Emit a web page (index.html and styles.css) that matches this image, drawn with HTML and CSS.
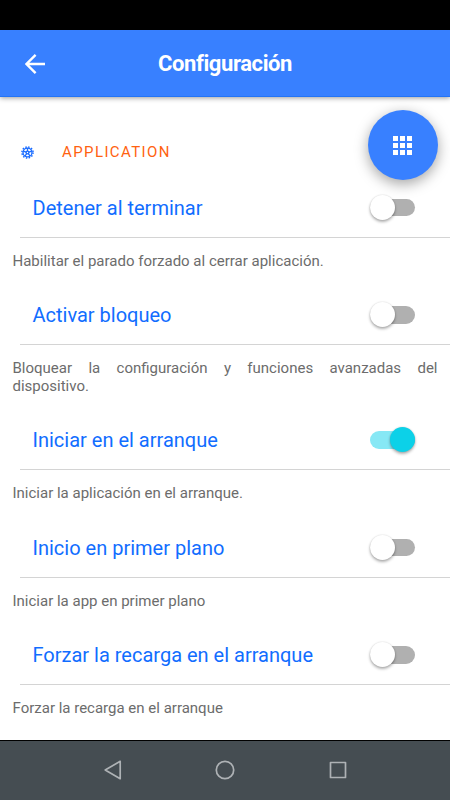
FILE: index.html
```html
<!DOCTYPE html>
<html lang="es">
<head>
	<meta charset="utf-8">
	<title>Configuración</title>
	<link rel="stylesheet" href="styles.css">
</head>
<body>
	<div class="statusbar"></div>
	<header class="toolbar">
		<svg class="back" viewBox="0 0 20 20"><path d="M20 10H1.5M10.6 .9L1.5 10l9.1 9.1"/></svg>
		<h1 class="title">Configuración</h1>
	</header>
	<main class="content">
		<div class="fab">
			<svg viewBox="0 0 19 19"><path d="M0 0h5v5H0zM7 0h5v5H7zM14 0h5v5h-5zM0 7h5v5H0zM7 7h5v5H7zM14 7h5v5h-5zM0 14h5v5H0zM7 14h5v5H7zM14 14h5v5h-5z"/></svg>
		</div>
		<div class="section">
			<svg class="gear" viewBox="0 0 14 14">
				<circle class="teeth" cx="7" cy="7" r="6"/>
				<circle cx="7" cy="7" r="4.8"/>
				<circle cx="7" cy="7" r="1.5"/>
				<path d="M7 5.5V2.2M8.4 6.5l3.2-1M7.9 8.2l1.9 2.7M6.1 8.2l-1.9 2.7M5.6 6.5l-3.2-1"/>
			</svg>
			<h2 class="section-title">APPLICATION</h2>
		</div>

		<div class="item">
			<span class="label">Detener al terminar</span>
			<span class="toggle"></span>
		</div>
		<p class="note">Habilitar el parado forzado al cerrar aplicación.</p>

		<div class="item">
			<span class="label">Activar bloqueo</span>
			<span class="toggle"></span>
		</div>
		<p class="note">Bloquear la configuración y funciones avanzadas del dispositivo.</p>

		<div class="item">
			<span class="label">Iniciar en el arranque</span>
			<span class="toggle on"></span>
		</div>
		<p class="note">Iniciar la aplicación en el arranque.</p>

		<div class="item">
			<span class="label">Inicio en primer plano</span>
			<span class="toggle"></span>
		</div>
		<p class="note">Iniciar la app en primer plano</p>

		<div class="item">
			<span class="label">Forzar la recarga en el arranque</span>
			<span class="toggle"></span>
		</div>
		<p class="note">Forzar la recarga en el arranque</p>
	</main>
	<nav class="navbar">
		<svg viewBox="0 0 20 20"><path d="M17.2 1.3v17.4L2.2 10z"/></svg>
		<svg viewBox="0 0 20 20"><circle cx="10" cy="10" r="8.7"/></svg>
		<svg viewBox="0 0 20 20"><path d="M2.5 2.5h15v15h-15z"/></svg>
	</nav>
</body>
</html>
```
FILE: styles.css
```css
* {
	box-sizing: border-box;
}
body {
	display: flex;
	flex-direction: column;
	height: 800px;
	margin: 0;
	overflow: hidden;
	background: #fff;
	font-family: Roboto, sans-serif;
}

.statusbar {
	flex: none;
	height: 30px;
	background: #000;
}
.toolbar {
	flex: none;
	display: grid;
	grid-template-columns: 70px 1fr 70px;
	align-items: center;
	height: 67px;
	padding-top: 1px;
	background: #3880ff;
	border-bottom: 1px solid #2474f5;
	box-shadow: 0 1px 5px rgba(0, 0, 0, .4);
	color: #fff;
}
.back {
	width: 20px;
	height: 20px;
	margin-left: 25px;
	fill: none;
	stroke: #fff;
	stroke-width: 2.4;
}
.title {
	margin: 0;
	font-size: 22px;
	font-weight: 700;
	letter-spacing: -.4px;
	text-align: center;
}

.content {
	position: relative;
	flex: 1;
	min-height: 0;
	padding-top: 25.5px;
}
.fab {
	position: absolute;
	top: 13px;
	right: 12.5px;
	display: flex;
	align-items: center;
	justify-content: center;
	width: 70px;
	height: 70px;
	border-radius: 50%;
	background: #3880ff;
	box-shadow: 0 4px 14px rgba(0, 0, 0, .36);
}
.fab svg {
	width: 19px;
	fill: #fff;
}

.section {
	display: flex;
	align-items: center;
	height: 55px;
	padding: 4px 20px 0 21px;
}
.gear {
	width: 13px;
	height: 13px;
	margin-right: 28px;
	fill: none;
	stroke: #1a6cff;
	stroke-width: 1.4;
}
.gear .teeth {
	stroke-width: 1.6;
	stroke-dasharray: 1.6 1.54;
}
.section-title {
	margin: 0;
	color: #ff6210;
	font-size: 15px;
	font-weight: 400;
	letter-spacing: 1.4px;
}

.item {
	display: flex;
	align-items: center;
	justify-content: space-between;
	height: 60px;
	margin-left: 20px;
	padding: 1px 35px 0 12.5px;
	border-bottom: 1px solid #d4d4d4;
}
.label {
	color: #116dff;
	font-size: 20px;
}
.toggle {
	position: relative;
	width: 45px;
	height: 17.5px;
	border-radius: 9px;
	background: #b0b0b0;
}
.toggle::after {
	content: "";
	position: absolute;
	top: -4px;
	left: 0;
	width: 25px;
	height: 25px;
	border-radius: 50%;
	background: #fff;
	box-shadow: 0 2px 3px rgba(0, 0, 0, .3), 0 0 2px rgba(0, 0, 0, .15);
}
.toggle.on {
	background: #87e8f5;
}
.toggle.on::after {
	left: 20px;
	background: #0cd1e8;
}

.note {
	margin: 15px 12.5px;
	color: #6c6c6c;
	font-size: 15px;
	line-height: 17.5px;
	text-align: justify;
}

.navbar {
	flex: none;
	display: flex;
	align-items: center;
	justify-content: center;
	gap: 92.5px;
	height: 60px;
	padding-bottom: 1px;
	background: #454d52;
	border-top: 1px solid #000;
}
.navbar svg {
	width: 20px;
	height: 20px;
	fill: none;
	stroke: #aeb2b5;
	stroke-width: 1.7;
	stroke-linejoin: round;
}
```
